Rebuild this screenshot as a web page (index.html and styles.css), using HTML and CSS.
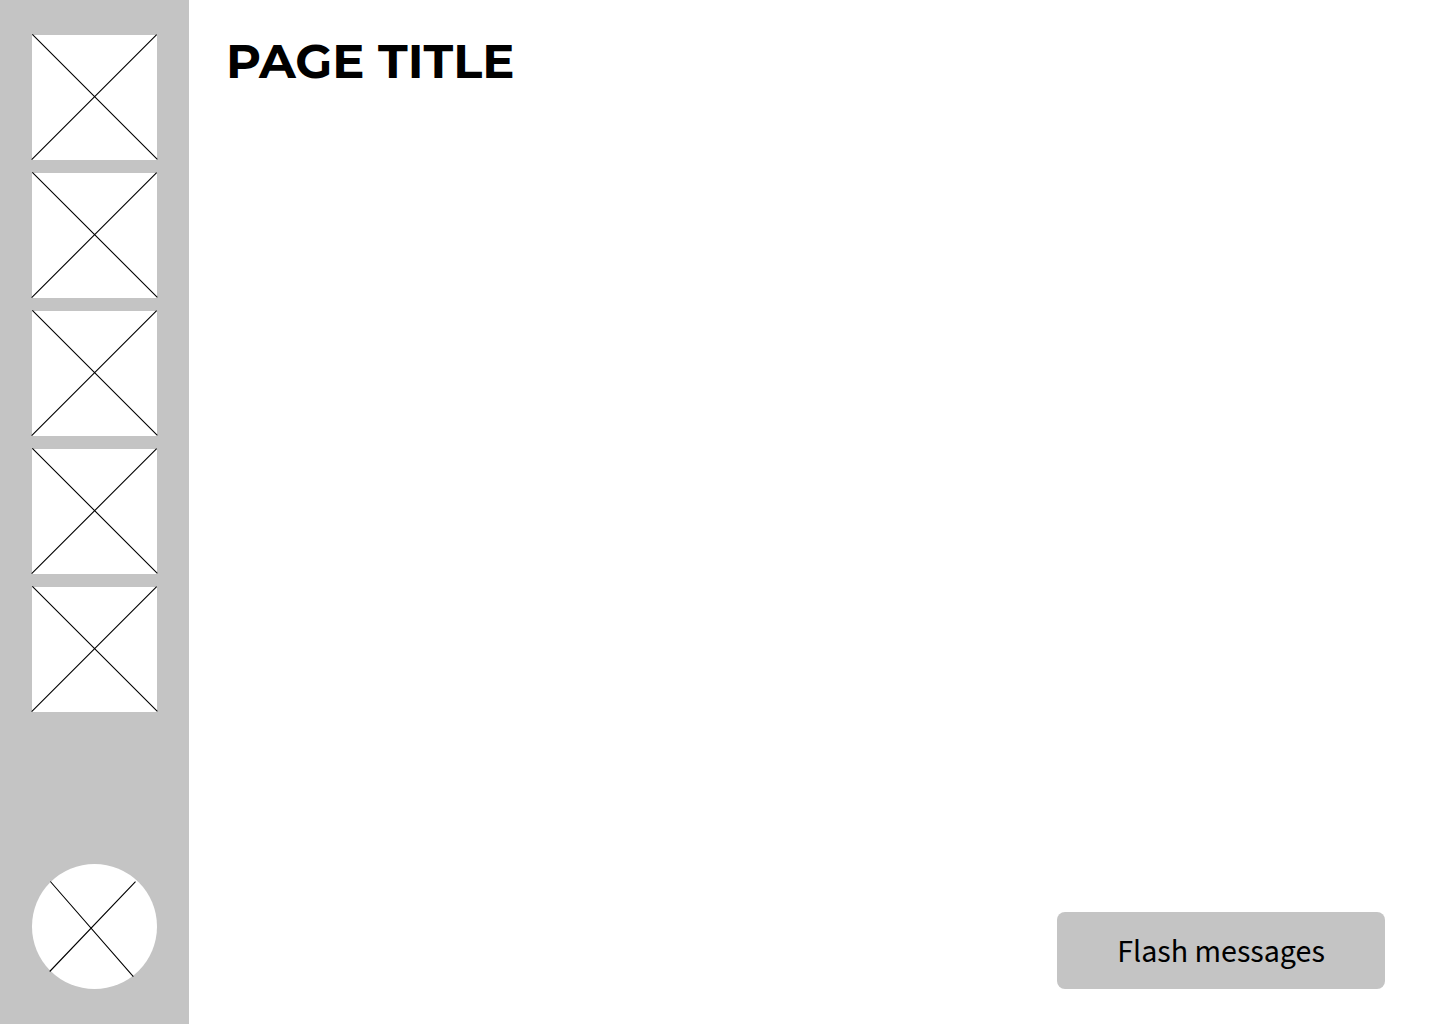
FILE: index.html
```html
<!DOCTYPE html>
<html lang="en">
<head>
<meta charset="utf-8">
<meta name="viewport" content="width=device-width, initial-scale=1">
<title>Page title</title>
<link rel="stylesheet" href="styles.css">
</head>
<body>
<div class="layout">
  <nav class="sidebar" aria-label="Main">
    <div class="menu">
      <svg class="tile" viewBox="0 0 125 125" aria-hidden="true"><path d="M.35 -.65L125.350 124.350M-.35 124.650L124.650 -.35"/></svg>
      <svg class="tile" viewBox="0 0 125 125" aria-hidden="true"><path d="M.35 -.65L125.350 124.350M-.35 124.650L124.650 -.35"/></svg>
      <svg class="tile" viewBox="0 0 125 125" aria-hidden="true"><path d="M.35 -.65L125.350 124.350M-.35 124.650L124.650 -.35"/></svg>
      <svg class="tile" viewBox="0 0 125 125" aria-hidden="true"><path d="M.35 -.65L125.350 124.350M-.35 124.650L124.650 -.35"/></svg>
      <svg class="tile" viewBox="0 0 125 125" aria-hidden="true"><path d="M.35 -.65L125.350 124.350M-.35 124.650L124.650 -.35"/></svg>
    </div>
    <svg class="tile avatar" viewBox="0 0 125 125" aria-hidden="true"><path d="M18.350 17.500L101.350 112.700M17.700 107.500L103.500 17.700"/></svg>
  </nav>
  <main class="content">
    <h1 class="title">PAGE TITLE</h1>
    <div class="flash" role="status">Flash messages</div>
  </main>
</div>
</body>
</html>
```
FILE: styles.css
```css
* {
  box-sizing: border-box;
}

body {
  margin: 0;
  background: #fff;
  color: #000;
}

.layout {
  display: flex;
  min-height: 100vh;
}

.sidebar {
  display: flex;
  flex: none;
  flex-direction: column;
  justify-content: space-between;
  gap: 32px;
  padding: 35px 32px;
  background: #c4c4c4;
}

.menu {
  display: flex;
  flex-direction: column;
  gap: 13px;
}

.tile {
  display: block;
  width: 125px;
  height: 125px;
  overflow: visible;
  background: #fff;
  fill: none;
  stroke: #000;
  stroke-width: 1.1;
}

.avatar {
  border-radius: 50%;
}

.content {
  display: flex;
  flex: 1;
  flex-direction: column;
  justify-content: space-between;
  padding: 31px 55px 35px 37px;
}

.title {
  margin: 0;
  font: 700 48px/60px Montserrat, Inter, sans-serif;
}

.flash {
  align-self: flex-end;
  width: 328px;
  padding: 18px 16px 14px;
  border-radius: 8px;
  background: #c4c4c4;
  font: 400 32px/45px "Source Sans Pro", "Source Sans 3", "Noto Sans CJK JP", sans-serif;
  text-align: center;
}
```
